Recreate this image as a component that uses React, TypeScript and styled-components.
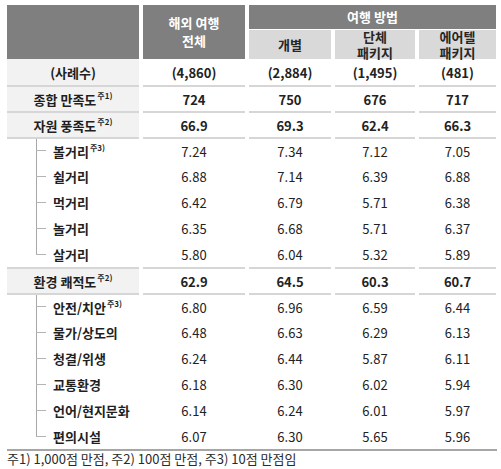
import React from "react";
import styled, { createGlobalStyle, css } from "styled-components";

const GlobalStyle = createGlobalStyle`
  html, body {
    margin: 0;
    padding: 0;
    background: #fff;
  }
  body {
    font-family: "Noto Sans CJK KR", "Noto Sans", sans-serif;
    color: #1f1f1f;
  }
`;

const COLUMNS = "132px 102px 82px 80px 77px";

interface DataRow {
  label: string;
  note?: string;
  values: string[];
  summary?: boolean;
  last?: boolean;
  divided?: boolean;
}

const rows: DataRow[] = [
  { label: "(사례수)", values: ["(4,860)", "(2,884)", "(1,495)", "(481)"], summary: true },
  { label: "종합 만족도", note: "주1)", values: ["724", "750", "676", "717"], summary: true, divided: true },
  { label: "자원 풍족도", note: "주2)", values: ["66.9", "69.3", "62.4", "66.3"], summary: true, divided: true },
  { label: "볼거리", note: "주3)", values: ["7.24", "7.34", "7.12", "7.05"], divided: true },
  { label: "쉴거리", values: ["6.88", "7.14", "6.39", "6.88"] },
  { label: "먹거리", values: ["6.42", "6.79", "5.71", "6.38"] },
  { label: "놀거리", values: ["6.35", "6.68", "5.71", "6.37"] },
  { label: "살거리", values: ["5.80", "6.04", "5.32", "5.89"], last: true },
  { label: "환경 쾌적도", note: "주2)", values: ["62.9", "64.5", "60.3", "60.7"], summary: true, divided: true },
  { label: "안전/치안", note: "주3)", values: ["6.80", "6.96", "6.59", "6.44"], divided: true },
  { label: "물가/상도의", values: ["6.48", "6.63", "6.29", "6.13"] },
  { label: "청결/위생", values: ["6.24", "6.44", "5.87", "6.11"] },
  { label: "교통환경", values: ["6.18", "6.30", "6.02", "5.94"] },
  { label: "언어/현지문화", values: ["6.14", "6.24", "6.01", "5.97"] },
  { label: "편의시설", values: ["6.07", "6.30", "5.65", "5.96"], last: true },
];

const Page = styled.div`
  width: 501px;
  height: 469px;
  padding: 5px 0 0 7px;
  box-sizing: border-box;
  font-size: 13px;
  overflow: hidden;
`;

const Header = styled.div`
  display: grid;
  grid-template-columns: ${COLUMNS};
  grid-template-rows: 24px 29px;
  column-gap: 4px;
  row-gap: 1px;
`;

const HeadCell = styled.div<{ $light?: boolean; $rows?: number; $cols?: number }>`
  display: flex;
  align-items: center;
  justify-content: center;
  text-align: center;
  font-weight: 700;
  line-height: ${(p) => (p.$light ? "16px" : "18px")};
  background: ${(p) => (p.$light ? "#d9d9d9" : "#7f7f7f")};
  color: ${(p) => (p.$light ? "#262626" : "#fff")};
  grid-row: span ${(p) => p.$rows ?? 1};
  grid-column: span ${(p) => p.$cols ?? 1};
`;

const Row = styled.div`
  display: grid;
  grid-template-columns: ${COLUMNS};
  column-gap: 4px;
  height: 26px;
`;

const Cell = styled.div<{ $divided?: boolean }>`
  box-sizing: border-box;
  display: flex;
  align-items: center;
  justify-content: center;
  height: 26px;
  ${(p) =>
    p.$divided &&
    css`
      border-top: 2px solid #d6d6d6;
    `}
`;

const LabelCell = styled(Cell)<{ $summary?: boolean }>`
  position: relative;
  font-weight: 700;
  ${(p) =>
    p.$summary
      ? css`
          background: #f2f2f2;
        `
      : css`
          justify-content: flex-start;
          padding-left: 46px;
        `}
`;

const Branch = styled.span<{ $last?: boolean }>`
  position: absolute;
  left: 29px;
  top: 0;
  bottom: ${(p) => (p.$last ? "12px" : "0")};
  width: 1px;
  background: #a8a8a8;
  &::after {
    content: "";
    position: absolute;
    left: 0;
    bottom: ${(p) => (p.$last ? "0" : "12px")};
    width: 10px;
    height: 1px;
    background: #b4b4b4;
  }
`;

const ValueCell = styled(Cell)<{ $bold?: boolean }>`
  font-weight: ${(p) => (p.$bold ? 700 : 400)};
  color: #222;
  padding-top: 1px;
`;

const Sup = styled.sup`
  font-size: 8px;
  font-weight: 700;
  line-height: 0;
  vertical-align: 6px;
  margin-left: 1px;
`;

const BottomRule = styled.div`
  width: 490px;
  height: 2px;
  background: #a6a6a6;
`;

const Footnote = styled.p`
  margin: 0;
  line-height: 16px;
  font-size: 13px;
  color: #2a2a2a;
`;

export default function App() {
  return (
    <>
      <GlobalStyle />
      <Page>
        <Header>
          <HeadCell $rows={2} />
          <HeadCell $rows={2}>
            해외 여행
            <br />
            전체
          </HeadCell>
          <HeadCell $cols={3}>여행 방법</HeadCell>
          <HeadCell $light>개별</HeadCell>
          <HeadCell $light>
            단체
            <br />
            패키지
          </HeadCell>
          <HeadCell $light>
            에어텔
            <br />
            패키지
          </HeadCell>
        </Header>
        {rows.map((row) => (
          <Row key={row.label}>
            <LabelCell $summary={row.summary} $divided={row.divided}>
              {!row.summary && <Branch $last={row.last} />}
              <span>
                {row.label}
                {row.note && <Sup>{row.note}</Sup>}
              </span>
            </LabelCell>
            {row.values.map((v, i) => (
              <ValueCell key={i} $bold={row.summary} $divided={row.divided}>
                {v}
              </ValueCell>
            ))}
          </Row>
        ))}
        <BottomRule />
        <Footnote>주1) 1,000점 만점, 주2) 100점 만점, 주3) 10점 만점임</Footnote>
      </Page>
    </>
  );
}
